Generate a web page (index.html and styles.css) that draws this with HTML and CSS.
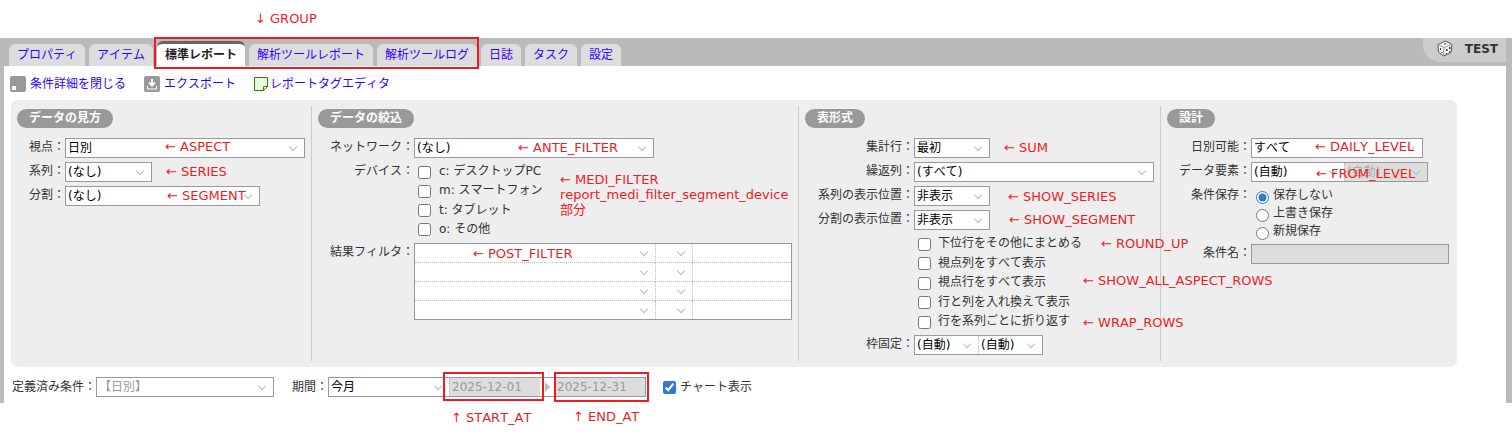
FILE: index.html
```html
<!DOCTYPE html>
<html lang="ja">
<head>
<meta charset="utf-8">
<title>標準レポート</title>
<link rel="stylesheet" href="styles.css">
</head>
<body>
<div class="frame">
  <header class="bar">
    <nav class="tabs">
      <a class="tab" href="#">プロパティ</a>
      <a class="tab" href="#">アイテム</a>
      <a class="tab active" href="#">標準レポート</a>
      <a class="tab" href="#">解析ツールレポート</a>
      <a class="tab" href="#">解析ツールログ</a>
      <a class="tab" href="#">日誌</a>
      <a class="tab" href="#">タスク</a>
      <a class="tab" href="#">設定</a>
    </nav>
    <div class="account">
      <svg width="16" height="17" viewBox="0 0 16 17">
        <path d="M1 4.5 8.5 1 15 4.5 14 12.5 6.5 16 1.5 12Z" fill="#f4f4f4" stroke="#555"/>
        <path d="M1 4.5 7 7.5 15 4.5M7 7.5 6.5 16" fill="none" stroke="#999"/>
        <path d="M7 3.5h2v1H7zM3 8h1v2H3zM4.500 12h1v1h-1zM9 9h1.500v2H9zM12 7h1.500v2H12zM9 13h1v1H9zM12 11h1v1.500h-1z" fill="#333"/>
      </svg>
      <span>TEST</span>
    </div>
  </header>

  <div class="toolbar">
    <a class="tool" href="#">
      <svg width="16" height="16" viewBox="0 0 16 16"><rect width="16" height="16" rx="2" fill="#999"/><path d="M2 10h4v4H2z" fill="#fff"/></svg>
      <span>条件詳細を閉じる</span>
    </a>
    <a class="tool" href="#">
      <svg width="16" height="16" viewBox="0 0 16 16"><rect width="16" height="16" rx="2" fill="#999"/><path d="M8 3v7M5 6.500l3 3 3-3" fill="none" stroke="#fff" stroke-width="2"/><path d="M3.500 10v3h9v-3" fill="none" stroke="#fff"/></svg>
      <span>エクスポート</span>
    </a>
    <a class="tool tag" href="#">
      <svg width="15" height="16" viewBox="0 0 15 16"><path d="M.5 1.500h13v9l-4 4h-9z" fill="#e6ffe0" stroke="#2a8000"/><path d="M13.500 10.500h-4v4z" fill="#fff" stroke="#2a8000"/></svg>
      <span>レポートタグエディタ</span>
    </a>
  </div>

  <main class="panel">
    <section class="group view">
      <h2>データの見方</h2>
      <div class="rows">
        <label for="aspect">視点：</label>
        <span class="box w240"><select id="aspect"><option>日別</option></select></span>
        <label for="series">系列：</label>
        <span class="box w87"><select id="series"><option>(なし)</option></select></span>
        <label for="segment">分割：</label>
        <span class="box w195"><select id="segment"><option>(なし)</option></select></span>
      </div>
    </section>

    <section class="group filter">
      <h2>データの絞込</h2>
      <div class="rows">
        <label for="network">ネットワーク：</label>
        <span class="box w240"><select id="network"><option>(なし)</option></select></span>
        <span class="name">デバイス：</span>
        <div class="checks four">
          <label><input type="checkbox">c: デスクトップPC</label>
          <label><input type="checkbox">m: スマートフォン</label>
          <label><input type="checkbox">t: タブレット</label>
          <label><input type="checkbox">o: その他</label>
        </div>
        <label for="post1">結果フィルタ：</label>
        <table class="post">
          <tr><td class="key"><span class="cell"><select id="post1"><option></option></select></span></td><td class="op"><span class="cell"><select aria-label="演算子1"><option></option></select></span></td><td><input type="text" aria-label="値1"></td></tr>
          <tr><td class="key"><span class="cell"><select aria-label="項目2"><option></option></select></span></td><td class="op"><span class="cell"><select aria-label="演算子2"><option></option></select></span></td><td><input type="text" aria-label="値2"></td></tr>
          <tr><td class="key"><span class="cell"><select aria-label="項目3"><option></option></select></span></td><td class="op"><span class="cell"><select aria-label="演算子3"><option></option></select></span></td><td><input type="text" aria-label="値3"></td></tr>
          <tr><td class="key"><span class="cell"><select aria-label="項目4"><option></option></select></span></td><td class="op"><span class="cell"><select aria-label="演算子4"><option></option></select></span></td><td><input type="text" aria-label="値4"></td></tr>
        </table>
      </div>
    </section>

    <section class="group format">
      <h2>表形式</h2>
      <div class="rows">
        <label for="sum">集計行：</label>
        <span class="box w76"><select id="sum"><option>最初</option></select></span>
        <label for="repeat">繰返列：</label>
        <span class="box w240"><select id="repeat"><option>(すべて)</option></select></span>
        <label for="show-series">系列の表示位置：</label>
        <span class="box w76"><select id="show-series"><option>非表示</option></select></span>
        <label for="show-segment">分割の表示位置：</label>
        <span class="box w76"><select id="show-segment"><option>非表示</option></select></span>
        <div class="checks five">
          <label><input type="checkbox">下位行をその他にまとめる</label>
          <label><input type="checkbox">視点列をすべて表示</label>
          <label><input type="checkbox">視点行をすべて表示</label>
          <label><input type="checkbox">行と列を入れ換えて表示</label>
          <label><input type="checkbox">行を系列ごとに折り返す</label>
        </div>
        <label for="freeze-row">枠固定：</label>
        <span class="split w129">
          <span class="cell"><select id="freeze-row"><option>(自動)</option></select></span>
          <span class="cell"><select aria-label="枠固定 列"><option>(自動)</option></select></span>
        </span>
      </div>
    </section>

    <section class="group design">
      <h2>設計</h2>
      <div class="rows">
        <label for="daily">日別可能：</label>
        <span class="box w172"><select id="daily"><option>すべて</option></select></span>
        <label for="from">データ要素：</label>
        <span class="split w177">
          <span class="cell wide"><select id="from"><option>(自動)</option></select></span>
          <span class="cell off"><select aria-label="データ要素 終了" disabled><option>(自動)</option></select></span>
        </span>
        <span class="name">条件保存：</span>
        <div class="radios">
          <label><input type="radio" name="save" checked>保存しない</label>
          <label><input type="radio" name="save">上書き保存</label>
          <label><input type="radio" name="save">新規保存</label>
        </div>
        <label for="cond-name">条件名：</label>
        <input class="text-off" id="cond-name" type="text" disabled>
      </div>
    </section>
  </main>

  <footer class="period">
    <label for="preset">定義済み条件：</label>
    <span class="box w178"><select id="preset" class="muted"><option>【日別】</option></select></span>
    <label class="term" for="term">期間：</label>
    <span class="split w318">
      <span class="cell term-cell"><select id="term"><option>今月</option></select></span>
      <input class="date" type="text" value="2025-12-01" aria-label="開始日" disabled>
      <span class="arrow"></span>
      <input class="date end" type="text" value="2025-12-31" aria-label="終了日" disabled>
    </span>
    <label class="chart"><input type="checkbox" checked>チャート表示</label>
  </footer>
</div>

<div class="notes">
  <div class="mark mark-group"></div>
  <div class="mark mark-start"></div>
  <div class="mark mark-end"></div>
  <p class="n-group">↓ GROUP</p>
  <p class="n-aspect">← ASPECT</p>
  <p class="n-series">← SERIES</p>
  <p class="n-segment">← SEGMENT</p>
  <p class="n-ante">← ANTE_FILTER</p>
  <p class="n-medi">← MEDI_FILTER<br>report_medi_filter_segment_device<br>部分</p>
  <p class="n-post">← POST_FILTER</p>
  <p class="n-sum">← SUM</p>
  <p class="n-show-series">← SHOW_SERIES</p>
  <p class="n-show-segment">← SHOW_SEGMENT</p>
  <p class="n-round">← ROUND_UP</p>
  <p class="n-all">← SHOW_ALL_ASPECT_ROWS</p>
  <p class="n-wrap">← WRAP_ROWS</p>
  <p class="n-daily">← DAILY_LEVEL</p>
  <p class="n-from">← FROM_LEVEL</p>
  <p class="n-start-at">↑ START_AT</p>
  <p class="n-end-at">↑ END_AT</p>
</div>
</body>
</html>
```
FILE: styles.css
```css
* { box-sizing: border-box; }

body {
  margin: 0;
  position: relative;
  min-height: 100vh;
  padding: 38px 0 45px;
  background: #fff;
  color: #333;
  font: 12px/18px "DejaVu Sans", "Noto Sans CJK JP", sans-serif;
  font-kerning: none;
}

input, select { font: inherit; margin: 0; }

.frame {
  border-left: 4px solid #bababa;
  border-right: 6px solid #bababa;
  padding-bottom: 6px;
}

/* Tab bar */
.bar {
  display: flex;
  justify-content: space-between;
  align-items: flex-start;
  height: 28px;
  background: #bababa;
}
.tabs {
  display: flex;
  align-items: flex-end;
  gap: 4px;
  height: 28px;
  padding-left: 5px;
}
.tab {
  height: 22px;
  padding: 1px 8px 0;
  border-radius: 6px 6px 0 0;
  background: #ddd;
  color: #30f;
  line-height: 21px;
  text-decoration: none;
  white-space: nowrap;
}
.tab.active {
  height: 25px;
  border-top: 3px solid #666;
  background: #fff;
  color: #222;
  font-weight: bold;
}
.account {
  display: flex;
  align-items: center;
  gap: 12px;
  height: 24px;
  padding: 0 8px 3px 14px;
  border-bottom-left-radius: 18px;
  background: #ccc;
  font-weight: bold;
}

/* Toolbar */
.toolbar {
  display: flex;
  align-items: center;
  gap: 18px;
  height: 34px;
  padding: 2px 6px 0;
}
.tool {
  display: flex;
  align-items: center;
  gap: 4px;
  color: #30f;
  text-decoration: none;
}
.tag { gap: 1px; }

/* Condition panel */
.panel {
  display: grid;
  grid-template-columns: 301fr 487fr 362fr 296fr;
  margin: 0 49px 0 7px;
  padding: 6px 0;
  border-radius: 7px;
  background: #eee;
}
.group {
  padding: 3px 6px 6px;
  border-right: 1px solid #ccc;
}
.group:last-child { border-right: 0; }
.group h2 {
  width: fit-content;
  margin: 0 0 10px;
  padding: 0 12px;
  border-radius: 10px;
  background: #999;
  color: #fff;
  font-size: 12px;
  line-height: 19px;
}
.rows {
  display: grid;
  gap: 4px 0;
  align-items: start;
}
.view .rows { grid-template-columns: 48px 1fr; }
.filter .rows { grid-template-columns: 96px 1fr; }
.format .rows { grid-template-columns: 109px 1fr; }
.design .rows { grid-template-columns: 84px 1fr; }
.rows > label, .name {
  justify-self: end;
  white-space: nowrap;
}

/* Drop-downs */
.box, .split {
  display: flex;
  position: relative;
  height: 20px;
  border: 1px solid #999;
  background: #fff;
}
.cell {
  display: flex;
  position: relative;
  flex: 1;
  height: 18px;
}
.cell + .cell { border-left: 1px dotted #bbb; }
.box select, .cell select {
  width: 100%;
  height: 18px;
  padding: 0 2px;
  border: 0;
  border-radius: 0;
  background: transparent;
  color: #000;
  line-height: 18px;
  appearance: none;
}
.box::after, .cell::after {
  content: "";
  position: absolute;
  top: 5px;
  right: 8px;
  width: 5px;
  height: 5px;
  border: solid #bbb;
  border-width: 0 1px 1px 0;
  transform: rotate(45deg);
  pointer-events: none;
}
.cell.wide { flex: 0 0 92px; }
.cell.off { background: #ddd; }
.cell.off select { color: #aaa; opacity: 1; }
.box select.muted { color: #999; }
.w76 { width: 76px; }
.w87 { width: 87px; }
.w129 { width: 129px; }
.w172 { width: 172px; }
.w177 { width: 177px; }
.w178 { width: 178px; }
.w195 { width: 195px; }
.w240 { width: 240px; }
.w318 { width: 318px; }

/* Check boxes and radios */
input[type="checkbox"], input[type="radio"] {
  flex: none;
  width: 13px;
  height: 13px;
  accent-color: #3377d6;
}
.checks {
  display: flex;
  flex-direction: column;
  justify-content: space-between;
  padding-left: 4px;
}
.checks label {
  display: flex;
  align-items: center;
  gap: 8px;
  line-height: 19px;
}
.checks input { margin-top: 1px; }
.four { min-height: 77px; }
.five { grid-column: 2; min-height: 97px; }
.checks.five label { gap: 7px; }
.radios { padding-left: 5px; }
.radios label {
  display: flex;
  gap: 4px;
}
.radios input { margin-top: 5px; }

/* Result filter */
.post {
  width: 378px;
  border: 1px solid #999;
  border-spacing: 0;
  background: #fff;
  table-layout: fixed;
}
.post td {
  padding: 0;
  border-bottom: 1px dotted #bbb;
}
.post tr:last-child td { border-bottom: 0; }
.post td + td { border-left: 1px dotted #bbb; }
.key { width: 240px; }
.op { width: 37px; }
.post input {
  display: block;
  width: 100%;
  height: 18px;
  padding: 0 2px;
  border: 0;
  background: transparent;
}
.text-off {
  width: 198px;
  height: 20px;
  border: 1px solid #999;
  background: #ddd;
}

/* Period row */
.period {
  display: flex;
  align-items: center;
  margin-top: 10px;
  padding-left: 8px;
}
.term { margin-left: 18px; }
.term-cell { flex: 0 0 120px; }
.date {
  width: 91px;
  height: 18px;
  padding: 0 2px;
  border: 0;
  border-left: 1px dotted #bbb;
  background: #ddd;
  color: #999;
}
.date.end {
  flex: 1;
  min-width: 0;
  border-left: 0;
}
.arrow {
  width: 15px;
  height: 18px;
  padding: 4px 0 0 5px;
}
.arrow::before {
  content: "";
  display: block;
  width: 0;
  border: solid transparent;
  border-width: 5px 0 5px 5px;
  border-left-color: #bbb;
}
.chart {
  display: flex;
  align-items: center;
  gap: 4px;
  margin-left: 17px;
}

/* Red annotations laid over the screen */
.notes p {
  position: absolute;
  margin: 0;
  color: #ed1c24;
  font-size: 13px;
  line-height: 15px;
  white-space: nowrap;
}
.mark {
  position: absolute;
  border: 2px solid #ed1c24;
}
.mark-group { left: 154px; top: 37px; width: 325px; height: 32px; }
.mark-start { left: 443px; top: 372px; width: 101px; height: 29px; }
.mark-end { left: 554px; top: 372px; width: 95px; height: 30px; }
.notes .n-group { left: 255px; top: 11px; }
.notes .n-aspect { left: 165px; top: 139px; }
.notes .n-series { left: 166px; top: 164px; }
.notes .n-segment { left: 167px; top: 188px; }
.notes .n-ante { left: 518px; top: 140px; }
.notes .n-medi { left: 560px; top: 172px; }
.notes .n-post { left: 473px; top: 246px; }
.notes .n-sum { left: 1004px; top: 140px; }
.notes .n-show-series { left: 1008px; top: 189px; }
.notes .n-show-segment { left: 1009px; top: 212px; }
.notes .n-round { left: 1101px; top: 236px; }
.notes .n-all { left: 1083px; top: 273px; }
.notes .n-wrap { left: 1083px; top: 315px; }
.notes .n-daily { left: 1315px; top: 139px; }
.notes .n-from { left: 1316px; top: 166px; }
.notes .n-start-at { left: 451px; top: 410px; }
.notes .n-end-at { left: 573px; top: 409px; }
```
